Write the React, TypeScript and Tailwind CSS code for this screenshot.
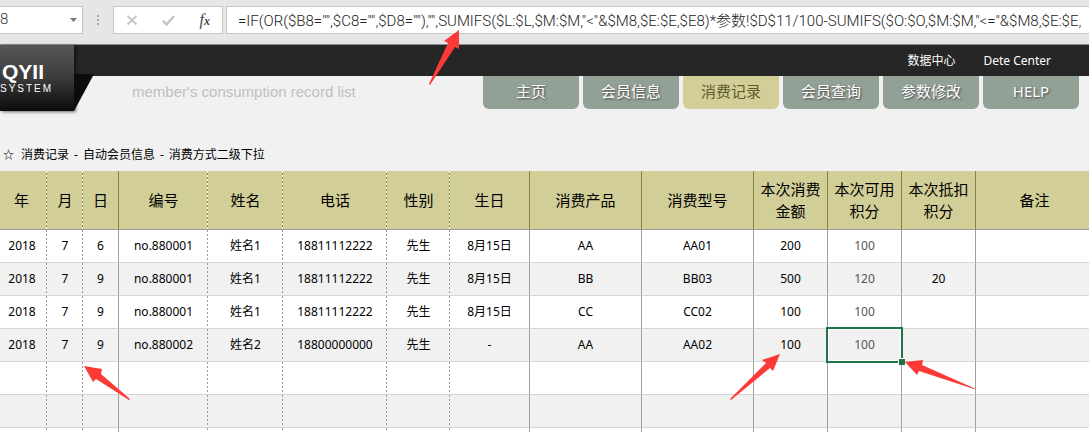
import React, { useState } from 'react';

const uiFont = "font-['Noto_Sans','Noto_Sans_CJK_SC',sans-serif]";

const tabs = ['主页', '会员信息', '消费记录', '会员查询', '参数修改', 'HELP'];

type Column = { label: string; width: string; edge: 'dashed' | 'solid' | 'none' };

const columns: Column[] = [
    { label: '年', width: 'w-[47px]', edge: 'dashed' },
    { label: '月', width: 'w-[36px]', edge: 'dashed' },
    { label: '日', width: 'w-[36px]', edge: 'solid' },
    { label: '编号', width: 'w-[89px]', edge: 'dashed' },
    { label: '姓名', width: 'w-[75px]', edge: 'dashed' },
    { label: '电话', width: 'w-[104px]', edge: 'dashed' },
    { label: '性别', width: 'w-[63px]', edge: 'dashed' },
    { label: '生日', width: 'w-[80px]', edge: 'solid' },
    { label: '消费产品', width: 'w-[112px]', edge: 'solid' },
    { label: '消费型号', width: 'w-[112px]', edge: 'solid' },
    { label: '本次消费金额', width: 'w-[74px]', edge: 'solid' },
    { label: '本次可用积分', width: 'w-[74px]', edge: 'solid' },
    { label: '本次抵扣积分', width: 'w-[74px]', edge: 'solid' },
    { label: '备注', width: '', edge: 'none' },
];

const POINTS_COL = 11;

const rows = [
    ['2018', '7', '6', 'no.880001', '姓名1', '18811112222', '先生', '8月15日', 'AA', 'AA01', '200', '100', '', ''],
    ['2018', '7', '9', 'no.880001', '姓名1', '18811112222', '先生', '8月15日', 'BB', 'BB03', '500', '120', '20', ''],
    ['2018', '7', '9', 'no.880001', '姓名1', '18811112222', '先生', '8月15日', 'CC', 'CC02', '100', '100', '', ''],
    ['2018', '7', '9', 'no.880002', '姓名2', '18800000000', '先生', '-', 'AA', 'AA02', '100', '100', '', ''],
    Array(14).fill(''),
    Array(14).fill(''),
    Array(14).fill(''),
];

const headEdge = {
    dashed: 'bg-[repeating-linear-gradient(#fff_0_2px,#8b8440_2px_4px)] bg-[length:1px_100%] bg-right bg-no-repeat',
    solid: 'border-r border-r-[#8b8440]',
    none: '',
};

const cellEdge = {
    dashed: 'bg-[repeating-linear-gradient(#999_0_2px,transparent_2px_4px)] bg-[length:1px_100%] bg-right bg-no-repeat',
    solid: 'border-r border-r-[#a0a0a0]',
    none: '',
};

function Arrow({ className, points, viewBox }: { className: string; points: string; viewBox: string }) {
    return (
        <svg className={`absolute pointer-events-none ${className}`} viewBox={viewBox} aria-hidden="true">
            <polygon points={points} fill="#fd3a37" />
        </svg>
    );
}

function FormulaBar() {
    const [formula, setFormula] = useState(
        '=IF(OR($B8="",$C8="",$D8=""),"",SUMIFS($L:$L,$M:$M,"<"&$M8,$E:$E,$E8)*参数!$D$11/100-SUMIFS($O:$O,$M:$M,"<="&$M8,$E:$E,$E8))'
    );
    const [cell, setCell] = useState('8');

    return (
        <div className="flex h-[45px] items-start border-b border-[#8c8c8c] bg-[#e6e6e6] pt-[6px]">
            <div className="flex h-7 w-[83px] shrink-0 items-center border border-l-0 border-[#c6c6c6] bg-white">
                <input
                    aria-label="Name box"
                    value={cell}
                    onChange={(e) => setCell(e.target.value)}
                    className="w-full min-w-0 pb-[2px] font-['Roboto',sans-serif] text-[15px] font-light text-[#333] outline-none"
                />
                <button aria-label="Choose name" className="px-[5px]">
                    <svg className="h-1 w-[7px]" viewBox="0 0 7 4"><path d="M0 0h7L3.5 4z" fill="#777" /></svg>
                </button>
            </div>
            <div className="flex h-7 w-[30px] shrink-0 flex-col items-center justify-center gap-[2px]">
                <span className="size-[2px] bg-[#a8a8a8]" />
                <span className="size-[2px] bg-[#a8a8a8]" />
                <span className="size-[2px] bg-[#a8a8a8]" />
            </div>
            <div className="flex h-7 w-[110px] shrink-0 items-center justify-around border border-[#c6c6c6] bg-white">
                <button aria-label="Cancel">
                    <svg className="h-3 w-3" viewBox="0 0 12 12"><path d="M1.5 2l9 8.500M10.500 2l-9 8.500" stroke="#c4c4c4" strokeWidth="1.800" fill="none" /></svg>
                </button>
                <button aria-label="Enter">
                    <svg className="h-3 w-[13px]" viewBox="0 0 13 12"><path d="M1 6.500l3.500 4L12 2" stroke="#c4c4c4" strokeWidth="2.600" fill="none" /></svg>
                </button>
                <button aria-label="Insert function" className="font-['Liberation_Serif',serif] text-base italic leading-4 text-[#444]">
                    f<span className="text-xs font-bold">x</span>
                </button>
            </div>
            <input
                aria-label="Formula"
                value={formula}
                onChange={(e) => setFormula(e.target.value)}
                className="ml-[3px] h-7 min-w-0 flex-1 border border-r-0 border-[#c6c6c6] bg-white pb-[2px] pl-[11px] pr-2 font-['Roboto','Noto_Sans_CJK_SC',sans-serif] text-[15px] font-light text-[#222] outline-none"
            />
        </div>
    );
}

function Header() {
    const [active, setActive] = useState('消费记录');

    return (
        <header className="relative">
            <div className="flex h-[31px] items-center justify-end gap-7 bg-[#262626] pr-[38px] text-xs text-white">
                <a href="#data">数据中心</a>
                <a href="#center">Dete Center</a>
            </div>
            <div className="flex items-start justify-between pl-[132px] pr-[10px]">
                <p className="pt-1 font-['Liberation_Sans',sans-serif] text-[15px] leading-6 text-[#bfbfbf]">
                    member's consumption record list
                </p>
                <nav className="flex gap-1">
                    {tabs.map((tab) => (
                        <button
                            key={tab}
                            onClick={() => setActive(tab)}
                            className={`h-[33px] w-24 rounded-b-md pb-[2px] text-[15px] ${
                                tab === active
                                    ? 'bg-[#d3ce98] text-[#5f5a2c]'
                                    : 'bg-[#92a196] text-white [text-shadow:1px_1px_2px_#444]'
                            }`}
                        >
                            {tab}
                        </button>
                    ))}
                </nav>
            </div>
            {/* logo ribbon hangs below the dark bar */}
            <div className="absolute left-0 top-0 flex">
                <div className="flex h-[66px] w-[74px] flex-col bg-linear-to-b from-[#585858] via-[#3c3c3c] to-[#0c0c0c] pt-4 font-['Liberation_Sans',sans-serif] text-white shadow-[2px_1px_3px_#0008]">
                    <span className="pl-[2px] text-[21px] font-bold leading-[22px]">QYII</span>
                    <span className="text-[10px] leading-3 tracking-[2px]">SYSTEM</span>
                </div>
                <svg className="mt-[29px] h-[37px] w-5" viewBox="0 0 20 37"><path d="M0 0h20L0 37z" fill="#0c0c0c" /></svg>
            </div>
        </header>
    );
}

function RecordTable() {
    return (
        <table className="w-full table-fixed border-separate border-spacing-0 text-center text-xs text-black">
            <colgroup>
                {columns.map((c) => <col key={c.label} className={c.width} />)}
            </colgroup>
            <thead>
                <tr className="h-[59px] bg-[#d1ce97]">
                    {columns.map((c) => (
                        <th
                            key={c.label}
                            className={`border-b border-b-[#999] px-1 py-0 text-[15px] font-normal leading-[22px] first:pr-2 last:pl-2 ${headEdge[c.edge]}`}
                        >
                            {c.label}
                        </th>
                    ))}
                </tr>
            </thead>
            <tbody>
                {rows.map((row, r) => (
                    <tr key={r} className="h-[33px] odd:bg-white even:bg-[#f1f1f1]">
                        {row.map((value, c) => (
                            <td
                                key={c}
                                className={`relative border-b border-b-[#d4d4d4] p-0 first:pr-[3px] ${cellEdge[columns[c].edge]} ${c === POINTS_COL ? 'text-[#555]' : ''}`}
                            >
                                {value}
                                {r === 3 && c === POINTS_COL && (
                                    <>
                                        <span className="absolute -bottom-[2px] -left-[2px] -right-[2px] -top-[2px] z-10 border-2 border-[#217346] ring-1 ring-inset ring-white" />
                                        <span className="absolute -bottom-[4px] -right-[4px] z-20 size-[7px] border-l border-t border-white bg-[#217346]" />
                                    </>
                                )}
                            </td>
                        ))}
                    </tr>
                ))}
            </tbody>
        </table>
    );
}

export default function App() {
    return (
        <div className={`relative h-screen w-full overflow-hidden bg-[#f1f1f1] ${uiFont}`}>
            <FormulaBar />
            <Header />
            <h1 className="flex gap-[5px] pb-[7px] pl-[3px] pt-[37px] text-xs leading-[18px] text-black">
                <span className="w-[13px] text-[11px]">☆</span>
                <span>消费记录</span>
                <span>-</span>
                <span>自动会员信息</span>
                <span>-</span>
                <span>消费方式二级下拉</span>
            </h1>
            <RecordTable />
            <Arrow className="left-[429px] top-[30px] h-[56px] w-[31px]" viewBox="0 0 31 56" points="30,0 15,11 19,13 0,54 1,55 26,17 30,19" />
            <Arrow className="left-[84px] top-[366px] h-[34px] w-[46px]" viewBox="0 0 46 34" points="0,0 18,3 17,8 46,33 45,34 12,13 9,16" />
            <Arrow className="left-[730px] top-[354px] h-[46px] w-[51px]" viewBox="0 0 51 46" points="50,0 32,6 36,9 0,45 1,46 40,14 43,17" />
            <Arrow className="left-[905px] top-[360px] h-[30px] w-[71px]" viewBox="0 0 71 30" points="0,2 18,0 17,5 71,29 69,29 14,11 12,15" />
        </div>
    );
}
